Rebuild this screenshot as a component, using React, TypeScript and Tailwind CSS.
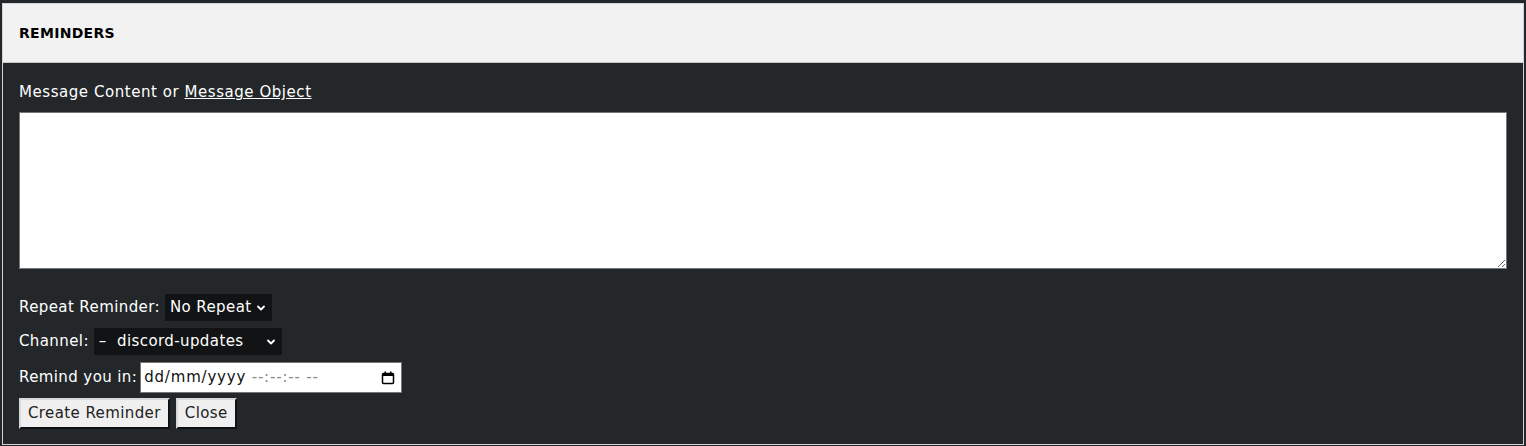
import React from 'react'

const font = { fontFamily: '"DejaVu Sans", "Open Sans", sans-serif' }

const Chevron = () => (
  <svg width="10" height="10" viewBox="0 0 10 10" className="shrink-0">
    <path d="M2 3.5 L5 6.5 L8 3.5" fill="none" stroke="white" strokeWidth="1.8" strokeLinecap="round" strokeLinejoin="round" />
  </svg>
)

const DarkSelect = ({ label, width }: { label: string; width: string }) => (
  <div className={`flex items-center justify-between h-[27px] bg-[#121314] text-white pl-[5px] pr-[6px] ${width}`}>
    <span className="whitespace-pre">{label}</span>
    <Chevron />
  </div>
)

export default function App() {
  return (
    <div className="min-h-[446px] bg-[#23272a] pt-[3px] px-[2px] pb-[2px] text-[15px] tracking-[0.4px]" style={font}>
      <div className="border border-[#d4d4d4] bg-[#23272a]">
        {/* Header */}
        <div className="h-[59px] bg-[#f2f2f2] border-b border-[#c8c8c8] flex items-center px-4 pt-[1px]">
          <h3 className="text-[14px] font-bold text-black tracking-[0.3px]">REMINDERS</h3>
        </div>

        {/* Body */}
        <div className="px-4 pt-[18px] pb-[15px] text-white">
          <div className="leading-[22px] tracking-[0.55px]">
            Message Content or <a className="underline">Message Object</a>
          </div>
          <textarea className="mt-[9px] block w-full h-[157px] bg-white border border-[#767676] text-black" />

          <div className="mt-[25px] flex flex-col gap-[7px]">
            <div className="flex items-center gap-[5px]">
              <span>Repeat Reminder:</span>
              <DarkSelect label="No Repeat" width="w-[107px]" />
            </div>
            <div className="flex items-center gap-[5px]">
              <span>Channel:</span>
              <DarkSelect label="–  discord-updates" width="w-[188px]" />
            </div>
            <div className="flex items-center gap-[3px]">
              <span>Remind you in:</span>
              <div className="flex items-center justify-between w-[262px] h-[31px] bg-white border border-[#767676] pl-[3px] pr-[6px]">
                <span className="text-[#111] tracking-[0.8px]">
                  dd/mm/yyyy <span className="text-[#8a8a8a]">--:--:-- --</span>
                </span>
                <svg width="14" height="14" viewBox="0 0 14 14">
                  <rect x="1.5" y="2.5" width="11" height="10" rx="1" fill="none" stroke="black" strokeWidth="1.5" />
                  <rect x="1.5" y="2.5" width="11" height="2.5" fill="black" />
                  <rect x="3.5" y="0.5" width="1.5" height="3" fill="black" />
                  <rect x="9" y="0.5" width="1.5" height="3" fill="black" />
                </svg>
              </div>
            </div>
            <div className="flex items-center gap-[6px] -mt-[2px]">
              <button className="h-[31px] px-[7px] bg-[#efefef] text-[#222] border-2 border-t-[#d8d8d8] border-l-[#d8d8d8] border-b-[#111] border-r-[#111]">
                Create Reminder
              </button>
              <button className="h-[31px] px-[7px] bg-[#efefef] text-[#222] border-2 border-t-[#d8d8d8] border-l-[#d8d8d8] border-b-[#111] border-r-[#111]">
                Close
              </button>
            </div>
          </div>
        </div>
      </div>
    </div>
  )
}
